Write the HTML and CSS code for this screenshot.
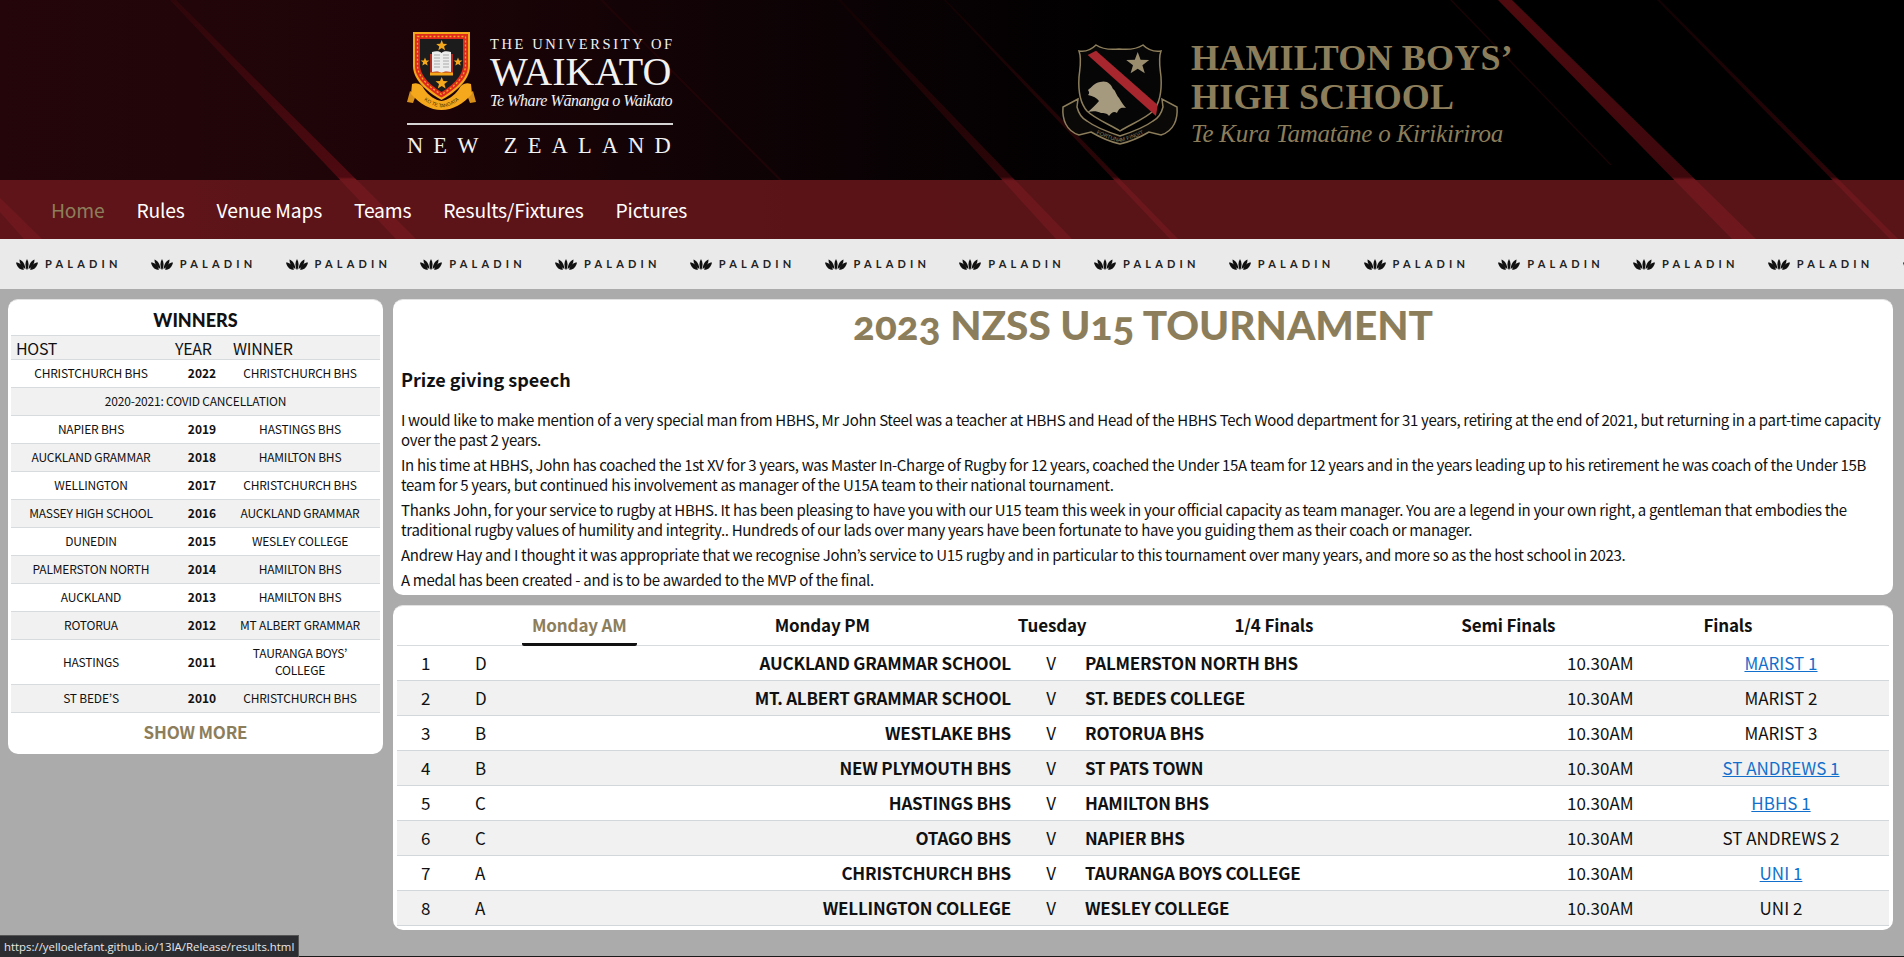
FILE: index.html
```html
<!DOCTYPE html>
<html lang="en">
<head>
<meta charset="utf-8">
<title>2023 NZSS U15 Tournament</title>
<link rel="stylesheet" href="styles.css">
</head>
<body>
<div class="hero">
  <svg class="hero-bg" viewBox="0 0 1904 239" preserveAspectRatio="none" aria-hidden="true">
    <defs>
      <linearGradient id="glow" x1="0" y1="0" x2="1" y2="0">
        <stop offset="0" stop-color="#24060a"/>
        <stop offset="0.2" stop-color="#1e0408"/>
        <stop offset="0.45" stop-color="#0a0204"/>
        <stop offset="0.6" stop-color="#000"/>
        <stop offset="1" stop-color="#000"/>
      </linearGradient>
      <linearGradient id="fadeA" x1="0" y1="0" x2="0" y2="1">
        <stop offset="0" stop-color="#2e060a"/>
        <stop offset="0.74" stop-color="#4e0a10"/>
        <stop offset="0.76" stop-color="#8c1c24"/>
        <stop offset="1" stop-color="#8c1c24"/>
      </linearGradient>
      <linearGradient id="fadeR" x1="0" y1="0" x2="0" y2="1">
        <stop offset="0" stop-color="#4e0a0f"/>
        <stop offset="0.74" stop-color="#3c080c"/>
        <stop offset="0.76" stop-color="#8c1c24"/>
        <stop offset="1" stop-color="#8c1c24"/>
      </linearGradient>
      <linearGradient id="fadeB" x1="0" y1="0" x2="0" y2="1">
        <stop offset="0" stop-color="#120203"/>
        <stop offset="0.74" stop-color="#2c0508"/>
        <stop offset="0.76" stop-color="#7a161d"/>
        <stop offset="1" stop-color="#7a161d"/>
      </linearGradient>
    </defs>
    <rect width="1904" height="239" fill="url(#glow)"/>
    <polygon points="170,0 176,0 416,239 396,239" fill="url(#fadeA)"/>
    <polygon points="600,0 603,0 782,180 779,180" fill="#1f0407"/>
    <polygon points="0,198 0,212 24,239 42,239" fill="#8c1c24"/>
    <polygon points="944,0 946,0 1178,239 1170,239" fill="url(#fadeB)"/>
    <polygon points="838,0 841,0 1072,239 1056,239" fill="url(#fadeB)"/>
    <polygon points="1498,0 1512,0 1756,239 1732,239" fill="url(#fadeR)"/>
    <polygon points="1450,0 1452,0 1612,165 1610,165" fill="#180305"/>
    <polygon points="1657,0 1660,0 1898,239 1890,239" fill="url(#fadeB)"/>
  </svg>
  <header class="brand">
    <div class="uni">
      <div class="uni-top">
        <svg class="uni-crest" viewBox="0 0 69 78" aria-hidden="true">
          <path d="M6 0H63V34C63 50 45 62 34.500 68C24 62 6 50 6 34Z" fill="#f5a81c"/>
          <path d="M8 2H61V34C61 48 44 60 34.500 65.500C25 60 8 48 8 34Z" fill="#dd2a1c"/>
          <path d="M10.500 4.500H58.500V33.500C58.500 46 44 57 34.500 62.500C25 57 10.500 46 10.500 33.500Z" fill="none" stroke="#f5a81c" stroke-width="1.300" stroke-dasharray="2 2"/>
          <path d="M13 7H56V33C56 45 43 55 34.500 60C26 55 13 45 13 33Z" fill="#1c1c1c"/>
          <path d="M34.700 8l1.500 3.700 4 .2-3.100 2.500 1 3.800-3.400-2.100-3.400 2.100 1-3.800-3.100-2.500 4-.2z" fill="#f5a81c"/>
          <path d="M34.700 45l1.700 4.100 4.500.2-3.500 2.800 1.200 4.300-3.900-2.400-3.900 2.400 1.200-4.300-3.500-2.800 4.500-.2z" fill="#f5a81c"/>
          <path d="M18 25.500l1.200 2.900 3.200.2-2.500 2 .8 3-2.700-1.700-2.700 1.700.8-3-2.500-2 3.200-.2z" fill="#f5a81c"/>
          <path d="M51 25.500l1.200 2.900 3.200.2-2.500 2 .8 3-2.700-1.700-2.700 1.700.8-3-2.500-2 3.200-.2z" fill="#f5a81c"/>
          <path d="M23 22H46V43H23Z" fill="#b42a1c"/>
          <path d="M25 20C29 18.500 33 19 34.500 21C36 19 40 18.500 44 20V40C40 39 36 39.500 34.500 41C33 39.500 29 39 25 40Z" fill="#ececec"/>
          <path d="M27 23H33M27 26H33M27 29H33M27 32H33M27 35H33M36 23H42M36 26H42M36 29H42M36 32H42M36 35H42" stroke="#999" stroke-width=".8"/>
          <path d="M23 40.500H46V43.500H23Z" fill="#f5a81c"/>
          <path d="M3 59L0 70L6 71L9 63ZM66 59L69 70L63 71L60 63Z" fill="#d9901a"/>
          <path d="M5 52C10 50 15 52 17 57C22 64 28 68 34.500 69C41 68 47 64 52 57C54 52 59 50 64 52L65 62C56 72 46 78 34.500 78C23 78 13 72 4 62Z" fill="#f5a81c"/>
          <path id="uni-motto" d="M12 64C20 71 27 75 34.500 75.500C42 75 49 71 57 64" fill="none"/>
          <text class="uni-motto-text"><textPath href="#uni-motto" startOffset="50%" text-anchor="middle">KO TE TANGATA</textPath></text>
        </svg>
        <div class="uni-name">
          <div class="uni-the">THE UNIVERSITY OF</div>
          <div class="uni-waikato">WAIKATO</div>
          <div class="uni-maori">Te Whare Wānanga o Waikato</div>
        </div>
      </div>
      <div class="uni-nz">NEW ZEALAND</div>
    </div>
    <div class="hbhs">
      <svg class="hbhs-crest" viewBox="0 0 118 102" aria-hidden="true">
        <path d="M18 8C24 9 30 7 35 2C41 6 48 7 58 6C68 7 76 6 82 2C87 7 93 9 100 8C97 16 99 24 100 34C101 50 99 60 92 68C84 76 68 82 59 88C50 82 34 76 26 68C19 60 17 50 18 34C19 24 21 16 18 8Z" fill="#060606" stroke="#8d7e5b" stroke-width="1.500"/>
        <path d="M26.700 12L35 7.700L96.700 62L95 73Z" fill="#a8262d"/>
        <path d="M76.700 9l2.900 7.700 8.600.3-6.800 5.200 2.400 8.100-7.100-4.600-7.100 4.600 2.400-8.100-6.800-5.200 8.600-.3z" fill="#9a8d6e"/>
        <path d="M27 47C31 44 33 40 39 39C46 37 50 41 52 46C55 48 55 52 58 55C60 58 62 62 65 65C60 64 58 65 56 70C53 68 51 69 48 73C46 70 43 70 40 70C36 68 32 68 27 69C31 65 35 62 38 58C36 55 32 53 27 52C29 50 28 49 27 47Z" fill="#a59a7e"/>
        <path d="M17 56L2 64C1 76 5 88 18 92L30 89C42 96 50 99 59 101C68 99 76 96 88 89L100 92C113 88 117 76 116 64L101 56L102 64C100 72 96 76 92 78C84 84 68 90 59 93C50 90 34 84 26 78C22 76 18 72 16 64Z" fill="#0a0908" stroke="#8d7e5b" stroke-width="1.500"/>
        <path id="hbhs-motto" d="M30 88C42 94 50 97 59 99C68 97 76 94 88 88" fill="none"/>
        <text class="hbhs-motto-text"><textPath href="#hbhs-motto" startOffset="50%" text-anchor="middle">FORTUNAM FINGIT</textPath></text>
      </svg>
      <div class="hbhs-name">
        <div class="hbhs-title">HAMILTON BOYS’</div>
        <div class="hbhs-title">HIGH SCHOOL</div>
        <div class="hbhs-maori">Te Kura Tamatāne o Kirikiriroa</div>
      </div>
    </div>
  </header>
  <nav class="nav">
    <a class="nav-link is-active">Home</a>
    <a class="nav-link">Rules</a>
    <a class="nav-link">Venue Maps</a>
    <a class="nav-link">Teams</a>
    <a class="nav-link">Results/Fixtures</a>
    <a class="nav-link">Pictures</a>
  </nav>
</div>

<div class="sponsors">
  <div class="sponsor"><svg class="leaf" viewBox="0 0 22 11" aria-hidden="true"><use href="#paladin"/></svg><span>PALADIN</span></div>
  <div class="sponsor"><svg class="leaf" viewBox="0 0 22 11" aria-hidden="true"><use href="#paladin"/></svg><span>PALADIN</span></div>
  <div class="sponsor"><svg class="leaf" viewBox="0 0 22 11" aria-hidden="true"><use href="#paladin"/></svg><span>PALADIN</span></div>
  <div class="sponsor"><svg class="leaf" viewBox="0 0 22 11" aria-hidden="true"><use href="#paladin"/></svg><span>PALADIN</span></div>
  <div class="sponsor"><svg class="leaf" viewBox="0 0 22 11" aria-hidden="true"><use href="#paladin"/></svg><span>PALADIN</span></div>
  <div class="sponsor"><svg class="leaf" viewBox="0 0 22 11" aria-hidden="true"><use href="#paladin"/></svg><span>PALADIN</span></div>
  <div class="sponsor"><svg class="leaf" viewBox="0 0 22 11" aria-hidden="true"><use href="#paladin"/></svg><span>PALADIN</span></div>
  <div class="sponsor"><svg class="leaf" viewBox="0 0 22 11" aria-hidden="true"><use href="#paladin"/></svg><span>PALADIN</span></div>
  <div class="sponsor"><svg class="leaf" viewBox="0 0 22 11" aria-hidden="true"><use href="#paladin"/></svg><span>PALADIN</span></div>
  <div class="sponsor"><svg class="leaf" viewBox="0 0 22 11" aria-hidden="true"><use href="#paladin"/></svg><span>PALADIN</span></div>
  <div class="sponsor"><svg class="leaf" viewBox="0 0 22 11" aria-hidden="true"><use href="#paladin"/></svg><span>PALADIN</span></div>
  <div class="sponsor"><svg class="leaf" viewBox="0 0 22 11" aria-hidden="true"><use href="#paladin"/></svg><span>PALADIN</span></div>
  <div class="sponsor"><svg class="leaf" viewBox="0 0 22 11" aria-hidden="true"><use href="#paladin"/></svg><span>PALADIN</span></div>
  <div class="sponsor"><svg class="leaf" viewBox="0 0 22 11" aria-hidden="true"><use href="#paladin"/></svg><span>PALADIN</span></div>
  <div class="sponsor"><svg class="leaf" viewBox="0 0 22 11" aria-hidden="true"><use href="#paladin"/></svg></div>
  <svg class="defs" aria-hidden="true"><defs><g id="paladin" fill="#111"><path d="M0 3.500C3.500 3.500 6.500 6 8 10.500C4 11.500 1 8 0 3.500Z"/><path d="M3.500 .5C6.500 1.500 8.700 4.500 9.500 10C6 8.500 3.500 5 3.500 .5Z"/><path d="M11 0C13 3 13 7 11.500 10.500H10.500C9 7 9 3 11 0Z"/><path d="M18.500 .5C18.500 5 16 8.500 12.500 10C13.300 4.500 15.500 1.500 18.500 .5Z"/><path d="M22 3.500C21 8 18 11.500 14 10.500C15.500 6 18.500 3.500 22 3.500Z"/></g></defs></svg>
</div>

<main class="content">
  <aside class="card winners">
    <h2 class="winners-title">WINNERS</h2>
    <table class="winners-table">
      <thead>
        <tr><th class="w-host">HOST</th><th class="w-year">YEAR</th><th class="w-winner">WINNER</th></tr>
      </thead>
      <tbody>
        <tr><td>CHRISTCHURCH BHS</td><td class="yr">2022</td><td>CHRISTCHURCH BHS</td></tr>
        <tr><td colspan="3" class="span-all">2020-2021: COVID CANCELLATION</td></tr>
        <tr><td>NAPIER BHS</td><td class="yr">2019</td><td>HASTINGS BHS</td></tr>
        <tr><td>AUCKLAND GRAMMAR</td><td class="yr">2018</td><td>HAMILTON BHS</td></tr>
        <tr><td>WELLINGTON</td><td class="yr">2017</td><td>CHRISTCHURCH BHS</td></tr>
        <tr><td>MASSEY HIGH SCHOOL</td><td class="yr">2016</td><td>AUCKLAND GRAMMAR</td></tr>
        <tr><td>DUNEDIN</td><td class="yr">2015</td><td>WESLEY COLLEGE</td></tr>
        <tr><td>PALMERSTON NORTH</td><td class="yr">2014</td><td>HAMILTON BHS</td></tr>
        <tr><td>AUCKLAND</td><td class="yr">2013</td><td>HAMILTON BHS</td></tr>
        <tr><td>ROTORUA</td><td class="yr">2012</td><td>MT ALBERT GRAMMAR</td></tr>
        <tr><td>HASTINGS</td><td class="yr">2011</td><td>TAURANGA BOYS’ COLLEGE</td></tr>
        <tr><td>ST BEDE’S</td><td class="yr">2010</td><td>CHRISTCHURCH BHS</td></tr>
      </tbody>
    </table>
    <div class="show-more">SHOW MORE</div>
  </aside>
  <div class="main-col">
    <section class="card speech">
      <h1 class="page-title">2023 NZSS U15 TOURNAMENT</h1>
      <h3 class="speech-title">Prize giving speech</h3>
      <p>I would like to make mention of a very special man from HBHS, Mr John Steel was a teacher at HBHS and Head of the HBHS Tech Wood department for 31 years, retiring at the end of 2021, but returning in a part-time capacity over the past 2 years.</p>
      <p>In his time at HBHS, John has coached the 1st XV for 3 years, was Master In-Charge of Rugby for 12 years, coached the Under 15A team for 12 years and in the years leading up to his retirement he was coach of the Under 15B team for 5 years, but continued his involvement as manager of the U15A team to their national tournament.</p>
      <p>Thanks John, for your service to rugby at HBHS. It has been pleasing to have you with our U15 team this week in your official capacity as team manager. You are a legend in your own right, a gentleman that embodies the traditional rugby values of humility and integrity.. Hundreds of our lads over many years have been fortunate to have you guiding them as their coach or manager.</p>
      <p>Andrew Hay and I thought it was appropriate that we recognise John’s service to U15 rugby and in particular to this tournament over many years, and more so as the host school in 2023.</p>
      <p>A medal has been created - and is to be awarded to the MVP of the final.</p>
    </section>
    <section class="card fixtures">
      <div class="tabs">
        <div class="tab is-active">Monday AM</div>
        <div class="tab">Monday PM</div>
        <div class="tab">Tuesday</div>
        <div class="tab">1/4 Finals</div>
        <div class="tab">Semi Finals</div>
        <div class="tab">Finals</div>
      </div>
      <div class="row"><span class="c-num">1</span><span class="c-pool">D</span><span class="c-home">AUCKLAND GRAMMAR SCHOOL</span><span class="c-v">V</span><span class="c-away">PALMERSTON NORTH BHS</span><span class="c-time">10.30AM</span><span class="c-venue"><a class="link">MARIST 1</a></span></div>
      <div class="row"><span class="c-num">2</span><span class="c-pool">D</span><span class="c-home">MT. ALBERT GRAMMAR SCHOOL</span><span class="c-v">V</span><span class="c-away">ST. BEDES COLLEGE</span><span class="c-time">10.30AM</span><span class="c-venue">MARIST 2</span></div>
      <div class="row"><span class="c-num">3</span><span class="c-pool">B</span><span class="c-home">WESTLAKE BHS</span><span class="c-v">V</span><span class="c-away">ROTORUA BHS</span><span class="c-time">10.30AM</span><span class="c-venue">MARIST 3</span></div>
      <div class="row"><span class="c-num">4</span><span class="c-pool">B</span><span class="c-home">NEW PLYMOUTH BHS</span><span class="c-v">V</span><span class="c-away">ST PATS TOWN</span><span class="c-time">10.30AM</span><span class="c-venue"><a class="link">ST ANDREWS 1</a></span></div>
      <div class="row"><span class="c-num">5</span><span class="c-pool">C</span><span class="c-home">HASTINGS BHS</span><span class="c-v">V</span><span class="c-away">HAMILTON BHS</span><span class="c-time">10.30AM</span><span class="c-venue"><a class="link">HBHS 1</a></span></div>
      <div class="row"><span class="c-num">6</span><span class="c-pool">C</span><span class="c-home">OTAGO BHS</span><span class="c-v">V</span><span class="c-away">NAPIER BHS</span><span class="c-time">10.30AM</span><span class="c-venue">ST ANDREWS 2</span></div>
      <div class="row"><span class="c-num">7</span><span class="c-pool">A</span><span class="c-home">CHRISTCHURCH BHS</span><span class="c-v">V</span><span class="c-away">TAURANGA BOYS COLLEGE</span><span class="c-time">10.30AM</span><span class="c-venue"><a class="link">UNI 1</a></span></div>
      <div class="row"><span class="c-num">8</span><span class="c-pool">A</span><span class="c-home">WELLINGTON COLLEGE</span><span class="c-v">V</span><span class="c-away">WESLEY COLLEGE</span><span class="c-time">10.30AM</span><span class="c-venue">UNI 2</span></div>
    </section>
  </div>
</main>
<footer class="footer"></footer>
<div class="status">https://yelloelefant.github.io/13IA/Release/results.html</div>
</body>
</html>
```

FILE: styles.css
```css
* { box-sizing: border-box; }
html, body { margin: 0; height: 957px; overflow: hidden; }
body {
  background: #ababab;
  color: #111;
  font-family: "Noto Sans CJK JP", "Noto Sans", sans-serif;
  display: flex;
  flex-direction: column;
  position: relative;
}
.hero { position: relative; height: 239px; overflow: hidden; flex: none; }
.hero-bg { position: absolute; inset: 0; width: 100%; height: 100%; }
.brand { position: relative; height: 180px; display: flex; }
.uni { width: 266px; margin: 32px 0 0 407px; color: #f2f2f2; font-family: "Liberation Serif", serif; }
.uni-top { display: flex; height: 89px; }
.uni-crest { width: 69px; height: 78px; flex: none; }
.uni-motto-text { font-family: "Liberation Sans", sans-serif; font-size: 5px; fill: #4a3200; }
.uni-name { margin-left: 14px; width: 183px; white-space: nowrap; }
.uni-the { font-size: 14.500px; letter-spacing: 2.600px; line-height: 17px; margin-top: 4px; }
.uni-waikato { font-size: 40px; line-height: 36px; margin-top: 1px; }
.uni-maori { font-size: 16px; font-style: italic; line-height: 20px; letter-spacing: -.45px; margin-top: 1px; }
.uni-nz { border-top: 2px solid #d4d4d4; margin-top: 2px; padding-top: 8px; font-size: 22.500px; line-height: 26px; letter-spacing: 10.100px; white-space: nowrap; }
.hbhs { display: flex; margin: 43px 0 0 388px; color: #8d7e5b; font-family: "Liberation Serif", serif; }
.hbhs-crest { width: 118px; height: 102px; flex: none; }
.hbhs-motto-text { font-family: "Liberation Sans", sans-serif; font-size: 5.500px; fill: #8d7e5b; }
.hbhs-name { margin: -4px 0 0 12px; white-space: nowrap; }
.hbhs-title { font-size: 36px; font-weight: 700; line-height: 39px; letter-spacing: .2px; }
.hbhs-maori { font-size: 25px; font-style: italic; line-height: 32px; letter-spacing: -.2px; margin-top: 1px; }
.nav { position: relative; height: 59px; background: rgba(104, 23, 28, .85); display: flex; align-items: center; padding-left: 51px; gap: 32px; }
.nav-link { color: #fff; font-size: 19.300px; letter-spacing: -.2px; line-height: 30px; }
.nav-link.is-active { color: #8d7e5b; }
.sponsors { flex: none; height: 50px; background: #eaeaea; display: flex; align-items: center; padding-left: 16px; overflow: hidden; }
.sponsor { flex: none; width: 134.750px; display: flex; align-items: center; gap: 7px; }
.leaf { width: 22px; height: 11px; flex: none; }
.sponsor span { font-family: "Lato", sans-serif; font-size: 11px; font-weight: 700; letter-spacing: 4.200px; color: #222; line-height: 12px; }
.defs { width: 0; height: 0; position: absolute; }
.content { flex: 1; display: flex; gap: 10px; padding: 10px 11px 0 8px; align-items: flex-start; min-height: 0; }
.card { background: #fff; border-radius: 10px; border-top: 1px solid #e3e3e3; }
.winners { width: 375px; height: 455px; padding: 0 3px; flex: none; }
.winners-title { margin: 0; text-align: center; font-family: "Lato", sans-serif; font-size: 18px; font-weight: 900; line-height: 40px; height: 35px; color: #111; }
.winners-table { width: 100%; border-collapse: collapse; table-layout: fixed; font-size: 12px; letter-spacing: -.2px; }
.winners-table th { background: #f1f1f1; font-weight: 400; font-size: 16px; letter-spacing: -.3px; text-align: left; height: 24px; padding: 0 5px; border-top: 1px solid #d8dbde; border-bottom: 1px solid #d8dbde; line-height: 22px; }
.w-host { width: 160px; }
.w-year { width: 62px; }
.winners-table th.w-year { padding-left: 4px; }
.winners-table th.w-winner { padding-left: 0; }
.winners-table td { text-align: center; height: 28px; padding: 4px 8px 6px; border-bottom: 1px solid #d8dbde; line-height: 17px; }
.winners-table td:last-child { padding: 4px 13px 6px 0; }
.winners-table td.span-all { padding: 4px 8px 6px; }
.winners-table tbody tr:nth-child(even) td { background: #f1f1f1; }
.winners-table .yr { font-weight: 700; letter-spacing: 0; padding: 0 0 2px; }
.show-more { text-align: center; color: #8d7e5b; font-weight: 700; font-size: 17px; letter-spacing: -.2px; line-height: 24px; padding-top: 7px; }
.main-col { flex: 1; min-width: 0; display: flex; flex-direction: column; gap: 10px; }
.speech { height: 296px; padding: 0 8px; }
.page-title { margin: 0; text-align: center; font-family: "Lato", sans-serif; font-weight: 900; font-size: 40.500px; font-variant-numeric: oldstyle-nums; line-height: 50px; color: #8d7e5b; }
.speech-title { margin: 16px 0 0; font-size: 18px; font-weight: 700; line-height: 26px; }
.speech p { margin: 0 0 5px; font-size: 15px; letter-spacing: -.32px; line-height: 20px; }
.speech-title + p { margin-top: 18px; }
.fixtures { height: 325px; padding: 0 4px; }
.tabs { display: flex; height: 40px; border-bottom: 1px solid #d8dbde; padding-left: 125px; gap: 128px; }
.tab { flex: none; padding: 0 10px; text-align: center; font-weight: 700; font-size: 17px; letter-spacing: -.15px; line-height: 38px; height: 40px; }
.tab.is-active { color: #8d7e5b; border-bottom: 3px solid #111; border-radius: 2px; }
.row { display: flex; align-items: center; height: 35px; padding-bottom: 2px; border-bottom: 1px solid #d2d7dc; font-size: 17px; letter-spacing: -.2px; white-space: nowrap; }
.row:nth-child(odd) { background: #f1f1f1; }
.c-num { width: 78px; padding-left: 24px; flex: none; }
.c-pool { width: 40px; flex: none; }
.c-home { width: 496px; flex: none; text-align: right; font-weight: 700; }
.c-v { width: 74px; flex: none; text-align: center; margin: 0 -3px 0 3px; }
.c-away { width: 482px; flex: none; font-weight: 700; }
.c-time { width: 106px; flex: none; letter-spacing: 0; }
.c-venue { flex: 1; text-align: center; letter-spacing: 0; }
.link { color: #1270cc; text-decoration: underline; }
.footer { flex: none; height: 1px; background: #1a1a1a; }
.status { position: absolute; left: 0; bottom: 0; height: 22px; background: #2b2d31; color: #e8e8e8; font-family: "Open Sans", sans-serif; font-size: 11.400px; line-height: 22px; padding: 0 4px; border-top: 1px solid #555; border-right: 1px solid #555; }
```
